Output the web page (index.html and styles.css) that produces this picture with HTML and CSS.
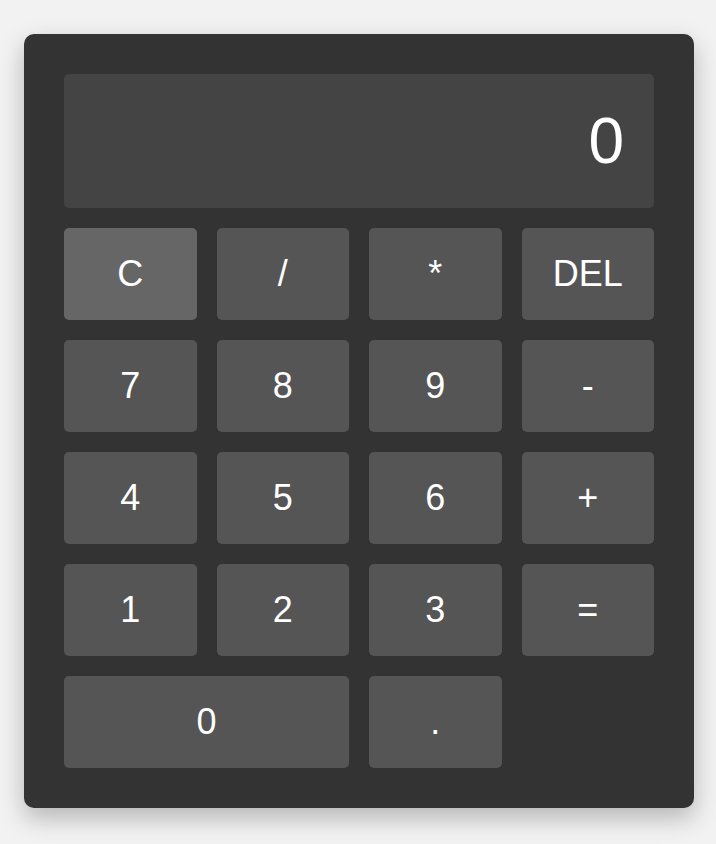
FILE: index.html
```html
<!DOCTYPE html>
<html>
<head>
<meta charset="utf-8">
<title>Calculator</title>
<link rel="stylesheet" href="styles.css">
</head>
<body>

<div class="calculator">
	<div class="display" id="display">0</div>
	<button class="btn btn-clear">C</button>
	<button class="btn">/</button>
	<button class="btn">*</button>
	<button class="btn">DEL</button>
	<button class="btn">7</button>
	<button class="btn">8</button>
	<button class="btn">9</button>
	<button class="btn">-</button>
	<button class="btn">4</button>
	<button class="btn">5</button>
	<button class="btn">6</button>
	<button class="btn">+</button>
	<button class="btn">1</button>
	<button class="btn">2</button>
	<button class="btn">3</button>
	<button class="btn">=</button>
	<button class="btn btn-zero">0</button>
	<button class="btn">.</button>
</div>

</body>
</html>
```
FILE: styles.css
```css
body {
	margin: 0;
	min-height: 100vh;
	display: flex;
	align-items: center;
	justify-content: center;
	background-color: #f2f2f2;
	font-family: "Liberation Sans", Arial, sans-serif;
}
.calculator {
	width: 590px;
	padding: 40px;
	margin: 0 0 2px 2px;
	background-color: #333;
	border-radius: 10px;
	box-shadow: 0 10px 25px rgba(0,0,0,.25);
	display: grid;
	grid-template-columns: repeat(4, 1fr);
	gap: 20px;
}
.display {
	grid-column: span 4;
	background-color: #444;
	color: #fff;
	font-size: 64px;
	text-align: right;
	padding: 30px;
	border-radius: 5px;
}
.btn {
	border: none;
	outline: none;
	cursor: pointer;
	background-color: #555;
	color: #fff;
	font-family: inherit;
	font-size: 36px;
	line-height: 42px;
	padding: 25px 0;
	border-radius: 5px;
}
.btn:hover {
	background-color: #5e5e5e;
}
.btn-clear {
	background-color: #666;
}
.btn-zero {
	grid-column: span 2;
}
```
